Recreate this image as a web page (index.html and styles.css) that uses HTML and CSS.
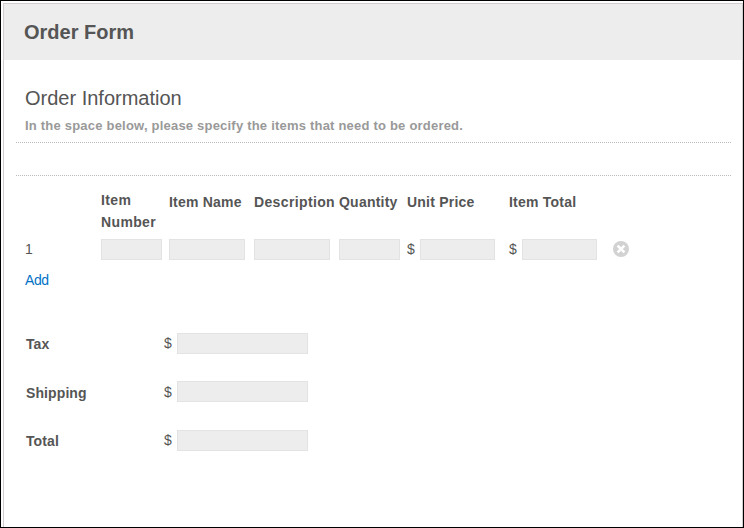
FILE: index.html
```html
<!DOCTYPE html>
<html lang="en">
<head>
<meta charset="utf-8">
<title>Order Form</title>
<link rel="stylesheet" href="styles.css">
</head>
<body>
<main class="frame">
  <div class="form">
    <header class="form-header"><h1>Order Form</h1></header>
    <section class="intro">
      <h2>Order Information</h2>
      <p>In the space below, please specify the items that need to be ordered.</p>
    </section>
    <div class="divider"></div>
    <section class="items">
      <div class="row heads">
        <span></span>
        <span class="wrap">Item Number</span>
        <span>Item Name</span>
        <span class="loose">Description</span>
        <span>Quantity</span>
        <span>Unit Price</span>
        <span>Item Total</span>
      </div>
      <div class="row entry">
        <span>1</span>
        <span class="field short"></span>
        <span class="field medium"></span>
        <span class="field medium"></span>
        <span class="field short"></span>
        <span class="money"><span class="sign">$</span><span class="field price"></span></span>
        <span class="money"><span class="sign">$</span><span class="field price"></span></span>
        <svg class="remove" viewBox="0 0 16 16"><circle cx="8" cy="8" r="8"/><path d="M4.6 4.6l6.8 6.8M11.4 4.6l-6.8 6.8"/></svg>
      </div>
      <a class="add">Add</a>
    </section>
    <section class="totals">
      <div class="total tax"><b>Tax</b><span class="sign">$</span><span class="field wide"></span></div>
      <div class="total shipping"><b>Shipping</b><span class="sign">$</span><span class="field wide"></span></div>
      <div class="total"><b>Total</b><span class="sign">$</span><span class="field wide"></span></div>
    </section>
  </div>
</main>
</body>
</html>
```
FILE: styles.css
```css
* { box-sizing: border-box; }
body {
  margin: 0;
  background: #fff;
  color: #555;
  font: 14px/22px "Liberation Sans", Arial, sans-serif;
}
.frame {
  height: 528px;
  border: 1px solid #000;
  padding: 2px 0 0 2px;
  overflow: hidden;
}
.form {
  height: 524px;
  border: 1px solid #d3cdd2;
  border-bottom: 0;
}
.form-header {
  height: 56px;
  padding: 16px 20px;
  background: #ededed;
}
h1, h2, p { margin: 0; }
h1 { font-size: 20px; line-height: 24px; }
.intro {
  height: 83px;
  margin: 0 11px 0 12px;
  padding: 26px 0 0 9px;
  border-bottom: 1px dotted #bbb;
}
h2 { font-size: 20px; line-height: 24px; font-weight: 400; }
p {
  margin-top: 6px;
  font-size: 13px;
  line-height: 20px;
  font-weight: 700;
  color: #999;
  letter-spacing: 0.21px;
}
.divider {
  height: 33px;
  margin: 0 11px 0 12px;
  border-bottom: 1px dotted #bbb;
}
.items { padding: 13px 0 0 21px; }
.row {
  display: grid;
  grid-template-columns: 76px 68px 85px 85px 68px 102px 104px 16px;
}
.heads {
  height: 49px;
  padding-top: 2px;
  font-weight: 700;
  letter-spacing: 0.22px;
  white-space: nowrap;
}
.heads .wrap { margin-top: -2px; width: 60px; white-space: normal; letter-spacing: 0.36px; }
.heads .loose { letter-spacing: 0.36px; }
.entry { height: 21px; align-items: center; }
.field {
  display: block;
  height: 21px;
  background: #ededed;
  border: 1px solid #e3e3e3;
}
.short { width: 61px; }
.medium { width: 76px; }
.price { width: 75px; }
.wide { width: 131px; }
.money { display: flex; }
.sign { width: 13px; line-height: 21px; }
.remove { width: 16px; height: 16px; }
.remove circle { fill: #d2d2d2; }
.remove path { stroke: #fff; stroke-width: 2.6; fill: none; }
.add {
  display: block;
  margin-top: 10px;
  color: #0072c6;
  letter-spacing: -0.4px;
}
.totals { padding: 42px 0 0 22px; }
.total { display: flex; height: 21px; margin-bottom: 28px; }
.total b { width: 138px; letter-spacing: 0.1px; }
.tax { margin-bottom: 27px; }
.shipping b { line-height: 24px; }
.shipping .sign { line-height: 23px; }
```
